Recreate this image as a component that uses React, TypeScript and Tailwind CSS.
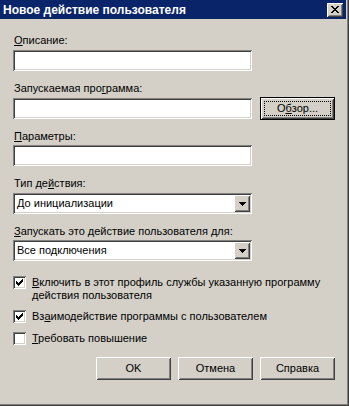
import React from "react";

const sunken =
  "shadow-[inset_1px_1px_#808080,inset_-1px_-1px_#ffffff,inset_2px_2px_#404040,inset_-2px_-2px_#d4d0c8]";
const raised =
  "shadow-[inset_1px_1px_#ffffff,inset_-1px_-1px_#404040,inset_2px_2px_#d4d0c8,inset_-2px_-2px_#808080]";

function Label({ children, className = "" }: { children: React.ReactNode; className?: string }) {
  return <div className={`h-[13px] leading-[13px] whitespace-nowrap ${className}`}>{children}</div>;
}

function Input() {
  return <div className={`h-[21px] w-[239px] bg-white ${sunken}`} />;
}

function Combo({ value }: { value: string }) {
  return (
    <div className={`h-[21px] w-[239px] bg-white ${sunken} flex items-center p-[2px]`}>
      <div className="flex-1 pl-[2px] leading-[13px] whitespace-nowrap">{value}</div>
      <div className={`w-[16px] h-[17px] bg-[#d4d0c8] ${raised} flex items-center justify-center`}>
        <svg width="7" height="4" viewBox="0 0 7 4" shapeRendering="crispEdges">
          <rect x="0" y="0" width="7" height="1" fill="#000" />
          <rect x="1" y="1" width="5" height="1" fill="#000" />
          <rect x="2" y="2" width="3" height="1" fill="#000" />
          <rect x="3" y="3" width="1" height="1" fill="#000" />
        </svg>
      </div>
    </div>
  );
}

function Check({ checked }: { checked: boolean }) {
  return (
    <div className={`w-[13px] h-[13px] shrink-0 bg-white ${sunken} relative`}>
      {checked && (
        <svg className="absolute left-0 top-0" width="13" height="13" viewBox="0 0 13 13" shapeRendering="crispEdges">
          <rect x="3" y="5" width="1" height="3" fill="#000" />
          <rect x="4" y="6" width="1" height="3" fill="#000" />
          <rect x="5" y="7" width="1" height="3" fill="#000" />
          <rect x="6" y="6" width="1" height="3" fill="#000" />
          <rect x="7" y="5" width="1" height="3" fill="#000" />
          <rect x="8" y="4" width="1" height="3" fill="#000" />
          <rect x="9" y="3" width="1" height="3" fill="#000" />
        </svg>
      )}
    </div>
  );
}

function Button({ children, focused = false }: { children: React.ReactNode; focused?: boolean }) {
  if (focused) {
    return (
      <div className="w-[75px] h-[23px] border border-black bg-[#d4d0c8]">
        <div className={`w-full h-full ${raised} p-[3px]`}>
          <div className="w-full h-full border border-dotted border-black flex items-center justify-center leading-[13px]">
            {children}
          </div>
        </div>
      </div>
    );
  }
  return (
    <div className={`w-[75px] h-[23px] bg-[#d4d0c8] ${raised} flex items-center justify-center leading-[13px]`}>
      {children}
    </div>
  );
}

export default function App() {
  return (
    <div
      className="w-[349px] h-[406px] bg-[#d4d0c8] text-black text-[11px] flex flex-col shadow-[inset_-1px_-1px_#404040,inset_-2px_-2px_#808080]"
      style={{ fontFamily: '"Liberation Sans", Arial, sans-serif' }}
    >
      <div className="h-[19px] mr-[3px] bg-[#0a246a] flex items-center justify-between pl-[3px] pr-[3px]">
        <div className="text-white font-bold text-[12px] leading-[14px] whitespace-nowrap">
          Новое действие пользователя
        </div>
        <div className={`w-[16px] h-[14px] bg-[#d4d0c8] ${raised} flex items-center justify-center`}>
          <svg width="8" height="7" viewBox="0 0 8 7" shapeRendering="crispEdges">
            <rect x="0" y="0" width="2" height="1" fill="#000" />
            <rect x="6" y="0" width="2" height="1" fill="#000" />
            <rect x="1" y="1" width="2" height="1" fill="#000" />
            <rect x="5" y="1" width="2" height="1" fill="#000" />
            <rect x="2" y="2" width="4" height="1" fill="#000" />
            <rect x="3" y="3" width="2" height="1" fill="#000" />
            <rect x="2" y="4" width="4" height="1" fill="#000" />
            <rect x="1" y="5" width="2" height="1" fill="#000" />
            <rect x="5" y="5" width="2" height="1" fill="#000" />
            <rect x="0" y="6" width="2" height="1" fill="#000" />
            <rect x="6" y="6" width="2" height="1" fill="#000" />
          </svg>
        </div>
      </div>

      <div className="flex flex-col pl-[13px] pr-[14px]">
        <Label className="mt-[15px] pl-[1px]">
          <u>О</u>писание:
        </Label>
        <div className="mt-[3px]">
          <Input />
        </div>

        <Label className="mt-[11px] pl-[1px]">
          Запускаемая про<u>г</u>рамма:
        </Label>
        <div className="mt-[2px] flex items-center gap-[8px] h-[23px]">
          <Input />
          <Button focused>
            О<u>б</u>зор...
          </Button>
        </div>

        <Label className="mt-[10px] pl-[1px]">
          <u>П</u>араметры:
        </Label>
        <div className="mt-[2px]">
          <Input />
        </div>

        <Label className="mt-[11px] pl-[1px]">
          Тип де<u>й</u>ствия:
        </Label>
        <div className="mt-[3px]">
          <Combo value="До инициализации" />
        </div>

        <Label className="mt-[11px] pl-[1px]">
          <u>З</u>апускать это действие пользователя для:
        </Label>
        <div className="mt-[2px]">
          <Combo value="Все подключения" />
        </div>

        <div className="mt-[15px] flex items-start gap-[6px]">
          <Check checked />
          <div className="leading-[13px]">
            <u>В</u>ключить в этот профиль службы указанную программу
            <br />
            действия пользователя
          </div>
        </div>

        <div className="mt-[8px] flex items-start gap-[6px]">
          <Check checked />
          <div className="leading-[13px] whitespace-nowrap">
            Вз<u>а</u>имодействие программы с пользователем
          </div>
        </div>

        <div className="mt-[9px] flex items-start gap-[6px]">
          <Check checked={false} />
          <div className="leading-[13px] whitespace-nowrap">
            <u>Т</u>ребовать повышение
          </div>
        </div>

        <div className="mt-[12px] flex justify-end gap-[7px]">
          <Button>OK</Button>
          <Button>Отмена</Button>
          <Button>Справка</Button>
        </div>
      </div>
    </div>
  );
}
